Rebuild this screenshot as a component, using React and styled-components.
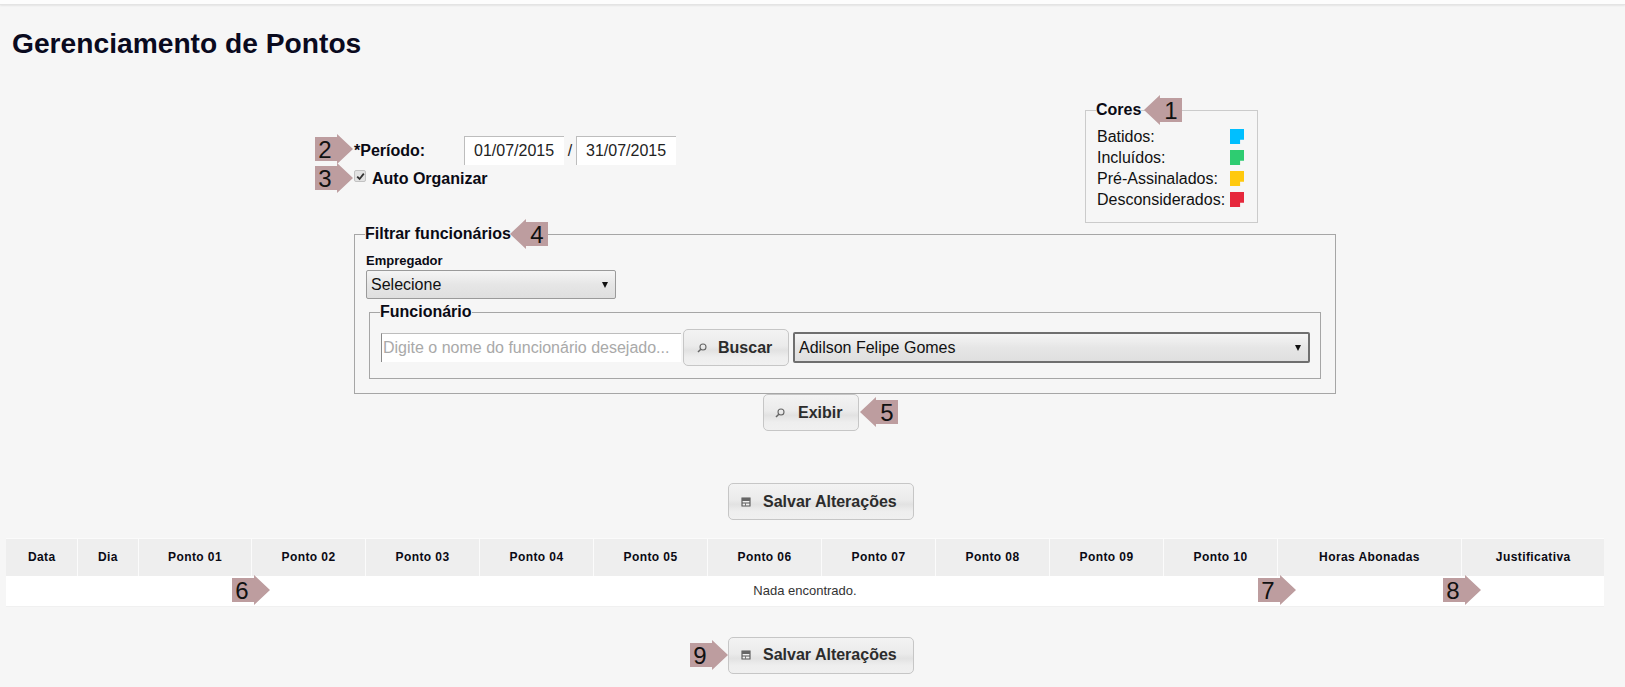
import React from "react";
import styled, { createGlobalStyle } from "styled-components";

const Global = createGlobalStyle`
  html, body { margin: 0; padding: 0; background: #f6f6f6; }
  body { font-family: "Liberation Sans", Arial, sans-serif; color: #0a0a14; overflow: hidden; }
`;

const Page = styled.div`
  position: relative;
  width: 1625px;
  height: 687px;
  overflow: hidden;
`;

const TopBar = styled.div`
  height: 4px;
  background: #fdfdfd;
  border-bottom: 1px solid #e4e4e4;
  box-shadow: 0 1px 2px rgba(0, 0, 0, 0.07);
`;

const Title = styled.h1`
  margin: 23px 0 0 12px;
  font-size: 28.2px;
  line-height: 31px;
  font-weight: bold;
  color: #0a0a1e;
`;

const TopRow = styled.div`
  display: flex;
  height: 166px;
  padding-left: 354px;
`;

const PeriodBlock = styled.div`
  width: 731px;
  padding-top: 77px;
`;

const PeriodRow = styled.div`
  display: flex;
  align-items: flex-start;
  height: 30px;
`;

const BoldLabel = styled.label`
  font-size: 16px;
  font-weight: bold;
  line-height: 29px;
`;

const PeriodLabel = styled(BoldLabel)`
  width: 110px;
`;

const DateInput = styled.input`
  width: 100px;
  height: 29px;
  box-sizing: border-box;
  padding: 0 0 0 9px;
  border: 0;
  border-top: 1px solid #bdbdbd;
  border-left: 1px solid #bdbdbd;
  background: #fff;
  font: 16px "Liberation Sans", Arial, sans-serif;
  color: #222;
  outline: none;
`;

const Slash = styled.span`
  width: 12px;
  text-align: center;
  font-size: 16px;
  line-height: 29px;
  color: #222;
`;

const AutoRow = styled.div`
  display: flex;
  align-items: center;
  gap: 6px;
  height: 24px;
`;

const CheckMark = styled.span`
  display: flex;
  align-items: center;
  justify-content: center;
  width: 12px;
  height: 12px;
  box-sizing: border-box;
  margin-top: -4px;
  border: 1px solid #c2c2c2;
  border-radius: 2px;
  background: #e2e2e2;
`;

const ColorBox = styled.fieldset`
  width: 173px;
  height: 122px;
  box-sizing: border-box;
  margin: 42px 0 0 0;
  padding: 0 0 0 11px;
  border: 1px solid #cbcbcb;
`;

const ColorLegend = styled.legend`
  margin-left: -1px;
  padding: 0;
  font-size: 16px;
  line-height: 18px;
  font-weight: bold;
`;

const ColorList = styled.div`
  margin-top: 7px;
`;

const ColorRow = styled.div`
  display: flex;
  align-items: center;
  height: 21px;
  font-size: 16px;
  color: #111;
`;

const ColorName = styled.span`
  width: 133px;
  white-space: nowrap;
`;

const Swatch = styled.span`
  width: 14px;
  height: 15px;
  background: ${(p) => p.$color};
  clip-path: polygon(0 0, 100% 0, 100% 72%, 72% 72%, 72% 100%, 0 100%);
`;

const FilterBox = styled.fieldset`
  width: 982px;
  height: 169px;
  box-sizing: border-box;
  margin: 0 0 0 354px;
  padding: 0 14px 0 11px;
  border: 1px solid #a6a6a6;
`;

const FilterLegend = styled.legend`
  margin-left: -1px;
  padding: 0;
  font-size: 16px;
  line-height: 18px;
  font-weight: bold;
`;

const FieldLabel = styled.div`
  margin-top: 10px;
  font-size: 13px;
  line-height: 15px;
  font-weight: bold;
`;

const Select = styled.div`
  display: flex;
  align-items: center;
  justify-content: space-between;
  box-sizing: border-box;
  height: ${(p) => (p.$wide ? 31 : 29)}px;
  width: ${(p) => (p.$wide ? "517px" : "250px")};
  margin: ${(p) => (p.$wide ? "0 0 0 4px" : "2px 0 0 0")};
  padding: 0 7px 0 4px;
  border: ${(p) => (p.$wide ? "2px solid #6f6f6f" : "1px solid #9a9a9a")};
  border-radius: 2px;
  background: linear-gradient(#f5f5f5, #e6e6e6 50%, #dfdfdf);
  font-size: 16px;
  color: #111;
`;

const Caret = styled.span`
  width: 0;
  height: 0;
  border-left: 3.5px solid transparent;
  border-right: 3.5px solid transparent;
  border-top: 6px solid #111;
`;

const EmployeeBox = styled.fieldset`
  width: 952px;
  height: 76px;
  box-sizing: border-box;
  margin: 4px 0 0 3px;
  padding: 8px 0 0 11px;
  border: 1px solid #a6a6a6;
`;

const EmployeeLegend = styled.legend`
  margin-left: -1px;
  padding: 0;
  font-size: 16px;
  line-height: 18px;
  font-weight: bold;
`;

const SearchRow = styled.div`
  display: flex;
  align-items: center;
  height: 37px;
`;

const SearchInput = styled.input`
  width: 300px;
  height: 29px;
  box-sizing: border-box;
  padding: 0 0 0 1px;
  border: 0;
  border-top: 1px solid #bdbdbd;
  border-left: 1px solid #8a8a8a;
  background: #fff;
  font: 16px "Liberation Sans", Arial, sans-serif;
  outline: none;
  &::placeholder { color: #a9a9a9; opacity: 1; }
`;

const Button = styled.button`
  display: inline-flex;
  align-items: center;
  box-sizing: border-box;
  width: ${(p) => p.$w}px;
  height: 37px;
  margin-left: ${(p) => p.$ml || 0}px;
  padding: 0 0 0 ${(p) => p.$pl || 12}px;
  gap: ${(p) => p.$gap || 12}px;
  border: 1px solid #c6c6c6;
  border-radius: 5px;
  background: linear-gradient(#f3f3f3, #ebebeb 45%, #e2e2e2 58%, #eeeeee 78%, #f0f0f0);
  font: bold 16px "Liberation Sans", Arial, sans-serif;
  color: #2c2c2c;
`;

const ActionRow = styled.div`
  display: flex;
  margin-top: ${(p) => p.$mt || 0}px;
  padding-left: ${(p) => p.$pl}px;
`;

const Table = styled.table`
  width: 1598px;
  margin: 18px 0 0 6px;
  border-collapse: collapse;
  table-layout: fixed;
`;

const Th = styled.th`
  width: ${(p) => p.$w}px;
  height: 37px;
  padding: 0 0 0 1px;
  box-sizing: border-box;
  background: #eeeeee;
  border-left: ${(p) => (p.$first ? 0 : "1px solid #fbfbfb")};
  border-top: 1px solid #fbfbfb;
  font-size: 12px;
  font-weight: bold;
  letter-spacing: 0.42px;
  color: #0a0a14;
`;

const EmptyCell = styled.td`
  height: 30px;
  padding: 0;
  background: #fff;
  border-bottom: 1px solid #f0f0f0;
  text-align: center;
  font-size: 13px;
  color: #333;
`;

const Arrow = styled.div`
  position: absolute;
  left: ${(p) => p.$x}px;
  top: ${(p) => p.$y}px;
  width: 38px;
  height: 30px;
  padding-top: 1px;
  box-sizing: border-box;
  background: #bd9d9f;
  clip-path: ${(p) =>
    p.$dir === "left"
      ? "polygon(0 50%, 42% 0, 42% 10%, 100% 10%, 100% 90%, 42% 90%, 42% 100%)"
      : "polygon(0 10%, 58% 10%, 58% 0, 100% 50%, 58% 100%, 58% 90%, 0 90%)"};
  display: flex;
  align-items: center;
  justify-content: ${(p) => (p.$dir === "left" ? "flex-end" : "flex-start")};
  font-size: 24px;
  line-height: 1;
  color: #111;
`;

const ArrowNum = styled.span`
  width: ${(p) => (p.$dir === "left" ? 22 : 20)}px;
  text-align: center;
`;

const SearchIcon = () => (
  <svg width="11" height="10" viewBox="0 0 11 10" fill="none" stroke="#666" strokeWidth="1.1">
    <circle cx="7" cy="4" r="3" />
    <path d="M4.8 6.2 2 9" strokeWidth="1.5" />
  </svg>
);

const DiskIcon = () => (
  <svg width="10" height="10" viewBox="0 0 10 10">
    <path d="M1 1h8v8H1z" fill="#f0f0f0" stroke="#555" strokeWidth="1.1" />
    <path d="M1 1h8v3H1z" fill="#666" />
    <path d="M1 6h8" stroke="#555" strokeWidth="1" />
    <path d="M4.5 6v3" stroke="#777" strokeWidth="1" />
  </svg>
);

const CheckIcon = () => (
  <svg width="9" height="9" viewBox="0 0 9 9" fill="none" stroke="#333" strokeWidth="1.8">
    <path d="M1.2 4.6 3.6 7 7.8 1.6" />
  </svg>
);

const colors = [
  ["Batidos:", "#00bfff"],
  ["Incluídos:", "#2ecc71"],
  ["Pré-Assinalados:", "#ffc90e"],
  ["Desconsiderados:", "#e6283c"],
];

const columns = [
  ["Data", 71],
  ["Dia", 61],
  ["Ponto 01", 113],
  ["Ponto 02", 114],
  ["Ponto 03", 114],
  ["Ponto 04", 114],
  ["Ponto 05", 114],
  ["Ponto 06", 114],
  ["Ponto 07", 114],
  ["Ponto 08", 114],
  ["Ponto 09", 114],
  ["Ponto 10", 114],
  ["Horas Abonadas", 184],
  ["Justificativa", 143],
];

const arrows = [
  ["1", "left", 1144, 95],
  ["2", "right", 315, 134],
  ["3", "right", 315, 163],
  ["4", "left", 510, 219],
  ["5", "left", 860, 397],
  ["6", "right", 232, 575],
  ["7", "right", 1258, 575],
  ["8", "right", 1443, 575],
  ["9", "right", 690, 640],
];

export default function App() {
  return (
    <Page>
      <Global />
      <TopBar />
      <Title>Gerenciamento de Pontos</Title>
      <TopRow>
        <PeriodBlock>
          <PeriodRow>
            <PeriodLabel>*Período:</PeriodLabel>
            <DateInput defaultValue="01/07/2015" />
            <Slash>/</Slash>
            <DateInput defaultValue="31/07/2015" />
          </PeriodRow>
          <AutoRow>
            <CheckMark>
              <CheckIcon />
            </CheckMark>
            <BoldLabel>Auto Organizar</BoldLabel>
          </AutoRow>
        </PeriodBlock>
        <ColorBox>
          <ColorLegend>Cores</ColorLegend>
          <ColorList>
            {colors.map(([name, color]) => (
              <ColorRow key={name}>
                <ColorName>{name}</ColorName>
                <Swatch $color={color} />
              </ColorRow>
            ))}
          </ColorList>
        </ColorBox>
      </TopRow>
      <FilterBox>
        <FilterLegend>Filtrar funcionários</FilterLegend>
        <FieldLabel>Empregador</FieldLabel>
        <Select>
          Selecione
          <Caret />
        </Select>
        <EmployeeBox>
          <EmployeeLegend>Funcionário</EmployeeLegend>
          <SearchRow>
            <SearchInput placeholder="Digite o nome do funcionário desejado..." />
            <Button $w={106} $ml={2} $gap={11}>
              <SearchIcon />
              Buscar
            </Button>
            <Select $wide>
              Adilson Felipe Gomes
              <Caret />
            </Select>
          </SearchRow>
        </EmployeeBox>
      </FilterBox>
      <ActionRow $pl={763}>
        <Button $w={96} $pl={10} $gap={13}>
          <SearchIcon />
          Exibir
        </Button>
      </ActionRow>
      <ActionRow $pl={728} $mt={52}>
        <Button $w={186}>
          <DiskIcon />
          Salvar Alterações
        </Button>
      </ActionRow>
      <Table>
        <thead>
          <tr>
            {columns.map(([name, w], i) => (
              <Th key={name} $w={w} $first={i === 0}>{name}</Th>
            ))}
          </tr>
        </thead>
        <tbody>
          <tr>
            <EmptyCell colSpan={14}>Nada encontrado.</EmptyCell>
          </tr>
        </tbody>
      </Table>
      <ActionRow $pl={728} $mt={30}>
        <Button $w={186}>
          <DiskIcon />
          Salvar Alterações
        </Button>
      </ActionRow>
      {arrows.map(([n, dir, x, y]) => (
        <Arrow key={n} $dir={dir} $x={x} $y={y}>
          <ArrowNum $dir={dir}>{n}</ArrowNum>
        </Arrow>
      ))}
    </Page>
  );
}
